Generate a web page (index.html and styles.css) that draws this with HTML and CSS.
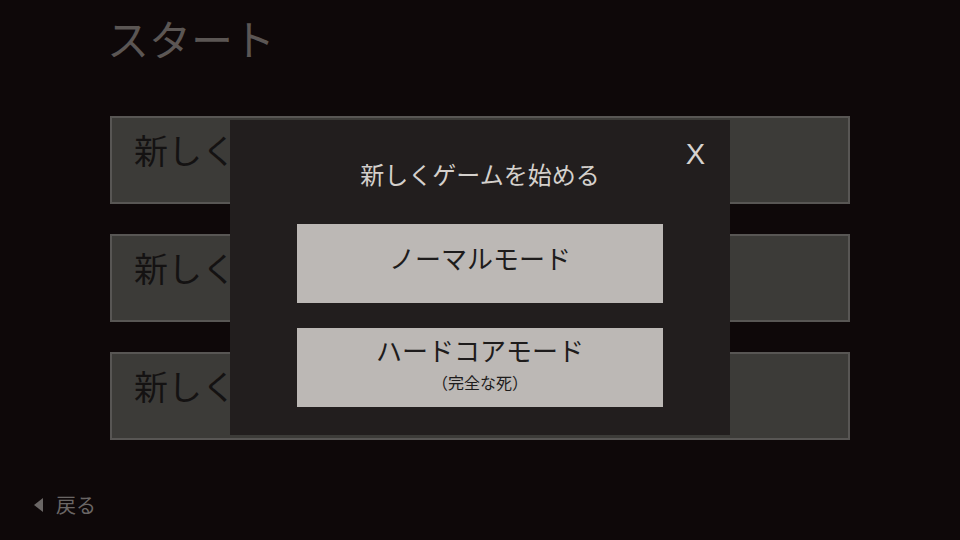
FILE: index.html
```html
<!DOCTYPE html>
<html lang="ja">
<head>
    <meta charset="UTF-8">
    <meta name="viewport" content="width=device-width, initial-scale=1.0">
    <title>スタート</title>
    <link rel="stylesheet" href="styles.css">
</head>
<body>

    <div class="screen">
        <h1 class="title">スタート</h1>

        <div class="slots">
            <div class="slot">新しく</div>
            <div class="slot">新しく</div>
            <div class="slot">新しく</div>
        </div>

        <div class="back">
            <span class="back-arrow"></span>
            <span>戻る</span>
        </div>

        <!-- モード選択ダイアログ -->
        <div class="dialog">
            <div class="dialog-close">X</div>
            <div class="dialog-title">新しくゲームを始める</div>
            <div class="mode-list">
                <div class="mode mode-single">ノーマルモード</div>
                <div class="mode mode-double">
                    <span>ハードコアモード</span>
                    <span class="mode-note">（完全な死）</span>
                </div>
            </div>
        </div>
    </div>

</body>
</html>
```

FILE: styles.css
```css
body {
    margin: 0;
    background-color: #0e0809;
    font-family: "Noto Sans CJK JP", "Noto Sans", sans-serif;
}

.screen {
    position: relative;
    width: 960px;
    height: 540px;
    box-sizing: border-box;
    padding: 13px 0 0 107px;
    display: flex;
    flex-direction: column;
}

.title {
    margin: 0;
    font-size: 42px;
    font-weight: 400;
    line-height: 50px;
    color: #5b5654;
}

.slots {
    margin: 53px 0 0 3px;
    width: 740px;
    display: flex;
    flex-direction: column;
    gap: 30px;
}

.slot {
    height: 88px;
    box-sizing: border-box;
    background-color: #3c3b38;
    border: 2px solid #585654;
    padding-left: 22px;
    font-size: 34px;
    line-height: 64px;
    color: #141212;
    white-space: nowrap;
    overflow: hidden;
}

.back {
    margin: 50px 0 0 -73px;
    display: flex;
    align-items: center;
    gap: 13px;
    font-size: 20px;
    color: #6a6665;
}

.back-arrow {
    width: 0;
    height: 0;
    border-top: 7px solid transparent;
    border-bottom: 7px solid transparent;
    border-right: 9px solid #6a6665;
}

.dialog {
    position: absolute;
    left: 230px;
    top: 120px;
    width: 500px;
    height: 315px;
    box-sizing: border-box;
    background-color: #221e1e;
    padding: 35px 67px 0;
    display: flex;
    flex-direction: column;
    align-items: center;
}

.dialog-close {
    position: absolute;
    top: 17px;
    right: 25px;
    font-family: "Liberation Sans", Arial, sans-serif;
    font-size: 29px;
    line-height: 34px;
    color: #d6d2ce;
}

.dialog-title {
    font-size: 24px;
    line-height: 38px;
    color: #d4d0cc;
}

.mode-list {
    margin-top: 31px;
    width: 100%;
    display: flex;
    flex-direction: column;
    gap: 25px;
}

.mode {
    height: 79px;
    box-sizing: border-box;
    background-color: #bcb8b5;
    color: #1e1c1c;
    font-size: 26px;
    line-height: 32px;
    display: flex;
    flex-direction: column;
    align-items: center;
    justify-content: center;
}

.mode-single {
    padding-bottom: 12px;
}

.mode-double {
    padding-bottom: 8px;
}

.mode-note {
    font-size: 16px;
    line-height: 22px;
    margin-top: 5px;
}
```
